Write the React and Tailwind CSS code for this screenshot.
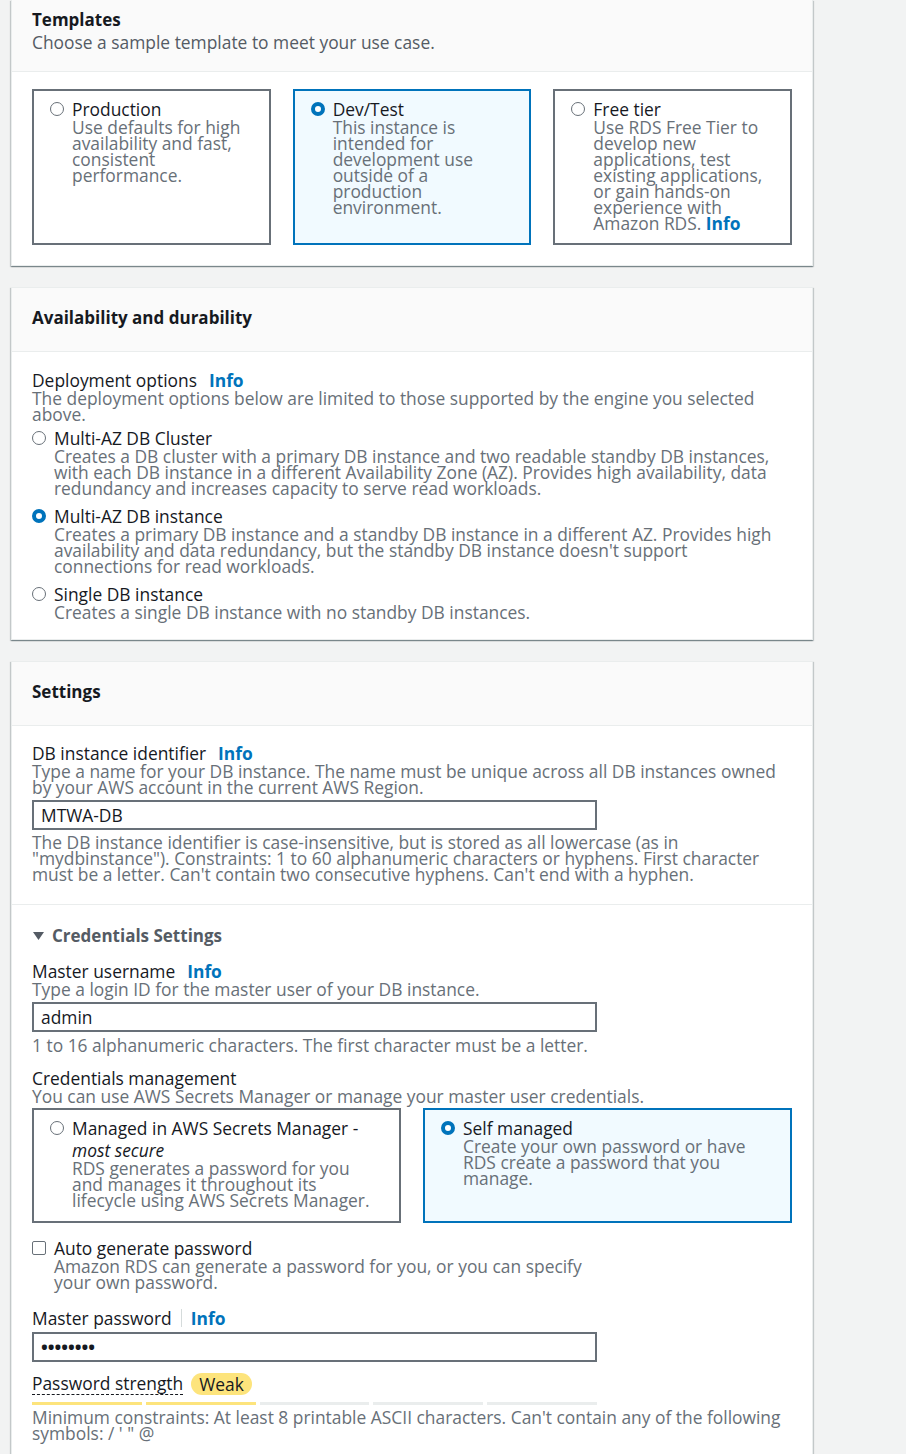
import { useState } from "react";

const FONT = "font-['Open_Sans',_sans-serif]";

function Info() {
  return <span className="ml-3 font-bold text-[#0073bb]">Info</span>;
}

function Radio({ checked }) {
  if (checked) {
    return (
      <span className="mt-[4px] block h-[14px] w-[14px] shrink-0 rounded-full border-[4px] border-[#0073bb] bg-white" />
    );
  }
  return (
    <span className="mt-[4px] block h-[14px] w-[14px] shrink-0 rounded-full border border-[#687078] bg-white" />
  );
}

function RadioCard({ checked, title, children, onClick }) {
  return (
    <div
      onClick={onClick}
      className={
        checked
          ? "flex cursor-pointer gap-2 border-2 border-[#0073bb] bg-[#f1faff] px-4 pt-[7px] pb-3"
          : "flex cursor-pointer gap-2 border-2 border-[#687078] bg-white px-4 pt-[7px] pb-3"
      }
    >
      <Radio checked={checked} />
      <div>
        <div className="leading-[22px] text-[#16191f]">{title}</div>
        <div className="-mt-px leading-4 text-[#687078]">{children}</div>
      </div>
    </div>
  );
}

function RadioRow({ checked, title, children, onClick, className }) {
  return (
    <div onClick={onClick} className={"flex cursor-pointer gap-2 " + className}>
      <Radio checked={checked} />
      <div>
        <div className="leading-[22px] text-[#16191f]">{title}</div>
        <div className="-mt-px leading-4 text-[#687078]">{children}</div>
      </div>
    </div>
  );
}

function Panel({ children, className }) {
  return (
    <section
      className={
        "w-[802px] border-x border-b border-[#eaeded] bg-white shadow-[0_1px_1px_0_rgba(0,28,36,0.3),1px_1px_1px_0_rgba(0,28,36,0.15),-1px_1px_1px_0_rgba(0,28,36,0.15)] " +
        className
      }
    >
      {children}
    </section>
  );
}

export default function App() {
  const [template, setTemplate] = useState("dev");
  const [deployment, setDeployment] = useState("instance");
  const [creds, setCreds] = useState("self");
  const [autoGen, setAutoGen] = useState(false);
  const [identifier, setIdentifier] = useState("MTWA-DB");
  const [username, setUsername] = useState("admin");
  const [password, setPassword] = useState("password");

  return (
    <div className={"min-h-screen bg-[#f2f3f3] pl-[11px] text-[17.4px] " + FONT}>
      {/* Templates */}
      <Panel>
        <div className="border-b border-[#eaeded] bg-[#fafafa] px-5 pt-[9px] pb-[18px]">
          <h2 className="text-[17px] font-bold leading-[22px] text-[#16191f]">Templates</h2>
          <p className="leading-[22px] text-[#545b64]">Choose a sample template to meet your use case.</p>
        </div>
        <div className="grid grid-cols-3 gap-[22px] px-5 pt-[17px] pb-5">
          <RadioCard
            checked={template === "prod"}
            onClick={() => setTemplate("prod")}
            title="Production"
          >
            Use defaults for high
            <br />
            availability and fast,
            <br />
            consistent
            <br />
            performance.
          </RadioCard>
          <RadioCard checked={template === "dev"} onClick={() => setTemplate("dev")} title="Dev/Test">
            This instance is
            <br />
            intended for
            <br />
            development use
            <br />
            outside of a
            <br />
            production
            <br />
            environment.
          </RadioCard>
          <RadioCard checked={template === "free"} onClick={() => setTemplate("free")} title="Free tier">
            Use RDS Free Tier to
            <br />
            develop new
            <br />
            applications, test
            <br />
            existing applications,
            <br />
            or gain hands-on
            <br />
            experience with
            <br />
            Amazon RDS. <span className="font-bold text-[#0073bb]">Info</span>
          </RadioCard>
        </div>
      </Panel>

      {/* Availability and durability */}
      <Panel className="mt-[21px] border-t">
        <div className="border-b border-[#eaeded] bg-[#fafafa] px-5 pt-[19px] pb-[22px]">
          <h2 className="text-[17px] font-bold leading-[22px] text-[#16191f]">Availability and durability</h2>
        </div>
        <div className="px-5 pt-[17px] pb-[19px]">
          <div className="leading-[22px] text-[#16191f]">
            Deployment options
            <Info />
          </div>
          <p className="-mt-px leading-4 text-[#687078]">
            The deployment options below are limited to those supported by the engine you selected
            <br />
            above.
          </p>
          <RadioRow
            className="mt-[5px]"
            checked={deployment === "cluster"}
            onClick={() => setDeployment("cluster")}
            title="Multi-AZ DB Cluster"
          >
            Creates a DB cluster with a primary DB instance and two readable standby DB instances,
            <br />
            with each DB instance in a different Availability Zone (AZ). Provides high availability, data
            <br />
            redundancy and increases capacity to serve read workloads.
          </RadioRow>
          <RadioRow
            className="mt-[9px]"
            checked={deployment === "instance"}
            onClick={() => setDeployment("instance")}
            title="Multi-AZ DB instance"
          >
            Creates a primary DB instance and a standby DB instance in a different AZ. Provides high
            <br />
            availability and data redundancy, but the standby DB instance doesn't support
            <br />
            connections for read workloads.
          </RadioRow>
          <RadioRow
            className="mt-[9px]"
            checked={deployment === "single"}
            onClick={() => setDeployment("single")}
            title="Single DB instance"
          >
            Creates a single DB instance with no standby DB instances.
          </RadioRow>
        </div>
      </Panel>

      {/* Settings */}
      <Panel className="mt-[21px] border-t">
        <div className="border-b border-[#eaeded] bg-[#fafafa] px-5 pt-[19px] pb-[22px]">
          <h2 className="text-[17px] font-bold leading-[22px] text-[#16191f]">Settings</h2>
        </div>
        <div className="border-b border-[#eaeded] px-5 pt-[16px] pb-[22px]">
          <div className="leading-[22px] text-[#16191f]">
            DB instance identifier
            <Info />
          </div>
          <p className="-mt-px leading-4 text-[#687078]">
            Type a name for your DB instance. The name must be unique across all DB instances owned
            <br />
            by your AWS account in the current AWS Region.
          </p>
          <input
            value={identifier}
            onChange={(e) => setIdentifier(e.target.value)}
            className="mt-[5px] block h-[30px] w-[565px] border-2 border-[#687078] px-[7px] text-[#16191f] outline-none"
          />
          <p className="mt-1 leading-4 text-[#687078]">
            The DB instance identifier is case-insensitive, but is stored as all lowercase (as in
            <br />
            "mydbinstance"). Constraints: 1 to 60 alphanumeric characters or hyphens. First character
            <br />
            must be a letter. Can't contain two consecutive hyphens. Can't end with a hyphen.
          </p>
        </div>

        <div className="px-5 pt-5 pb-6">
          <div className="flex items-center gap-2 text-[17px] font-bold leading-[22px] text-[#545b64]">
            <svg width="11" height="8" viewBox="0 0 11 8" className="ml-px">
              <polygon points="0,0 11,0 5.5,8" fill="#545b64" />
            </svg>
            Credentials Settings
          </div>

          <div className="mt-[13px] leading-[22px] text-[#16191f]">
            Master username
            <Info />
          </div>
          <p className="-mt-px leading-4 text-[#687078]">Type a login ID for the master user of your DB instance.</p>
          <input
            value={username}
            onChange={(e) => setUsername(e.target.value)}
            className="mt-[5px] block h-[30px] w-[565px] border-2 border-[#687078] px-[7px] text-[#16191f] outline-none"
          />
          <p className="mt-[5px] leading-4 text-[#687078]">
            1 to 16 alphanumeric characters. The first character must be a letter.
          </p>

          <div className="mt-[14px] leading-[22px] text-[#16191f]">Credentials management</div>
          <p className="-mt-px leading-4 text-[#687078]">
            You can use AWS Secrets Manager or manage your master user credentials.
          </p>
          <div className="mt-1 grid h-[115px] grid-cols-2 gap-[22px]">
            <RadioCard
              checked={creds === "secrets"}
              onClick={() => setCreds("secrets")}
              title={
                <>
                  Managed in AWS Secrets Manager -
                  <br />
                  <i>most secure</i>
                </>
              }
            >
              RDS generates a password for you
              <br />
              and manages it throughout its
              <br />
              lifecycle using AWS Secrets Manager.
            </RadioCard>
            <RadioCard checked={creds === "self"} onClick={() => setCreds("self")} title="Self managed">
              Create your own password or have
              <br />
              RDS create a password that you
              <br />
              manage.
            </RadioCard>
          </div>

          <label className="mt-[14px] flex cursor-pointer gap-2">
            <input
              type="checkbox"
              checked={autoGen}
              onChange={(e) => setAutoGen(e.target.checked)}
              className="mt-[4px] h-[14px] w-[14px] shrink-0 appearance-none rounded-[2px] border border-[#687078] bg-white checked:bg-[#0073bb]"
            />
            <span>
              <span className="block leading-[22px] text-[#16191f]">Auto generate password</span>
              <span className="-mt-px block leading-4 text-[#687078]">
                Amazon RDS can generate a password for you, or you can specify
                <br />
                your own password.
              </span>
            </span>
          </label>

          <div className="mt-[17px] flex items-center leading-[22px] text-[#16191f]">
            Master password
            <span className="mx-[9px] h-[18px] w-px bg-[#d5dbdb]" />
            <span className="font-bold text-[#0073bb]">Info</span>
          </div>
          <input
            type="password"
            value={password}
            onChange={(e) => setPassword(e.target.value)}
            className="mt-[3px] block h-[30px] w-[565px] border-2 border-[#687078] px-[7px] text-[18px] font-bold text-[#16191f] outline-none"
          />

          <div className="mt-[10px] flex items-center gap-2">
            <span className="border-b border-dashed border-[#16191f] leading-[22px] text-[#16191f]">
              Password strength
            </span>
            <span className="rounded-full bg-[#fde47c] px-2 leading-[22px] text-[#16191f]">Weak</span>
          </div>
          <div className="mt-[7px] flex w-[565px] gap-1">
            <span className="h-[3px] flex-1 bg-[#fde47c]" />
            <span className="h-[3px] flex-1 bg-[#fde47c]" />
            <span className="h-[3px] flex-1 bg-[#eaeded]" />
            <span className="h-[3px] flex-1 bg-[#eaeded]" />
            <span className="h-[3px] flex-1 bg-[#eaeded]" />
          </div>
          <p className="mt-[4px] leading-4 text-[#687078]">
            Minimum constraints: At least 8 printable ASCII characters. Can't contain any of the following
            <br />
            symbols: / ' " @
          </p>
        </div>
      </Panel>
    </div>
  );
}
